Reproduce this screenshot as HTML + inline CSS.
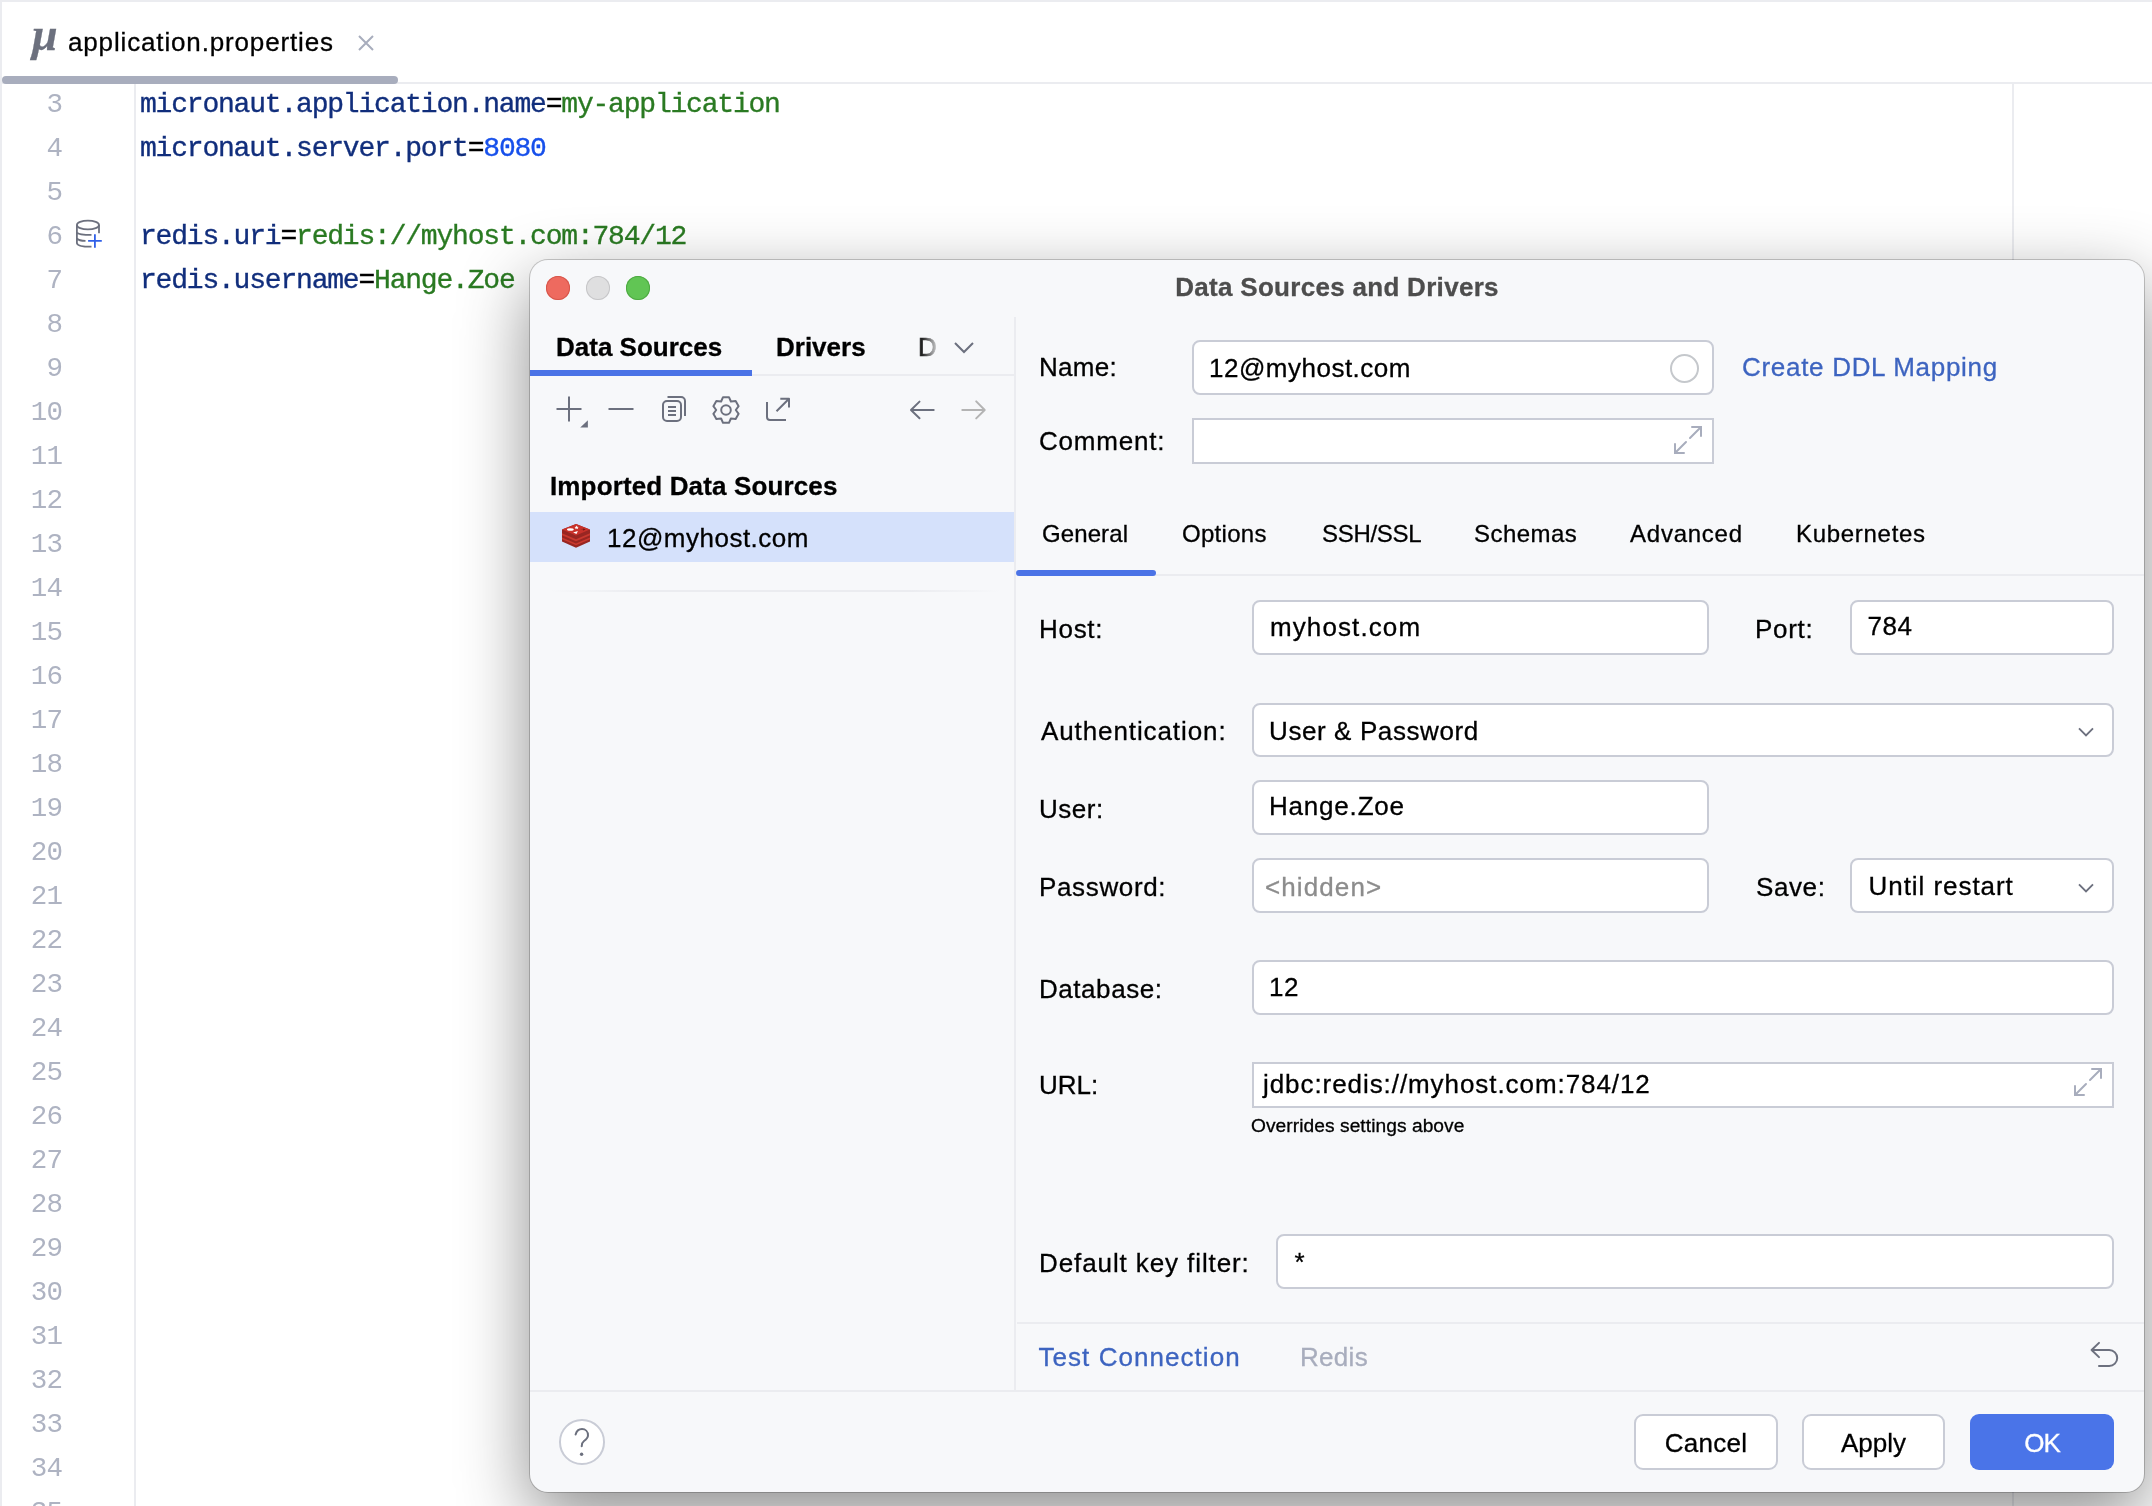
<!DOCTYPE html>
<html><head><meta charset="utf-8">
<style>
html,body{margin:0;padding:0;}
body{width:2152px;height:1506px;overflow:hidden;background:#fff;position:relative;will-change:transform;font-family:"Liberation Sans",sans-serif;color:#000;}
.a{position:absolute;}
.t{position:absolute;white-space:nowrap;line-height:1;font-size:26px;-webkit-text-stroke:0.3px currentColor;}
.ln{position:absolute;left:0;width:62px;text-align:right;font-family:"Liberation Mono",monospace;font-size:27.5px;letter-spacing:-0.9px;line-height:44px;color:#aeb3c2;}
.code{position:absolute;left:140px;font-family:"Liberation Mono",monospace;font-size:28px;letter-spacing:-1.2px;line-height:44px;white-space:pre;color:#000;-webkit-text-stroke:0.35px currentColor;}
.k{color:#112e7c}.v{color:#2a7a22}.n{color:#1750eb}
.inp{position:absolute;background:#fff;border:2px solid #c9ccd6;border-radius:8px;box-sizing:border-box;}
.sq{border-radius:0;}
.btn{position:absolute;background:#fff;border:2px solid #c9ccd6;border-radius:9px;box-sizing:border-box;}
.lbl{position:absolute;white-space:nowrap;line-height:1;font-size:26px;color:#000;-webkit-text-stroke:0.3px currentColor;}
.sep{position:absolute;height:2px;background:#ebecf0;}
</style></head><body>
<!-- editor frame -->
<div class="a" style="left:0;top:0;width:2152px;height:2px;background:#ebecf0"></div>
<div class="a" style="left:0;top:0;width:2px;height:1506px;background:#ebecf0"></div>
<div class="a" style="left:2px;top:82px;width:2150px;height:2px;background:#ebecf0"></div>
<div class="a" style="left:2px;top:76px;width:396px;height:8px;border-radius:4px;background:#a8adbd"></div>
<div class="a" style="left:134px;top:84px;width:2px;height:1422px;background:#ebecf0"></div>
<div class="a" style="left:2012px;top:84px;width:2px;height:1422px;background:#ebecf0"></div>
<!-- tab -->
<div class="t" style="left:32px;top:12px;font-family:'Liberation Serif',serif;font-style:italic;font-weight:bold;font-size:46px;color:#6c707e">&#956;</div>
<div class="t" style="left:68px;top:29px;letter-spacing:0.85px">application.properties</div>
<svg class="a" style="left:356px;top:33px" width="20" height="20" viewBox="0 0 20 20"><path d="M3 3L17 17M17 3L3 17" stroke="#a8adbd" stroke-width="2"/></svg>
<!-- gutter numbers -->
<div class="ln" style="top:83px">3</div>
<div class="ln" style="top:127px">4</div>
<div class="ln" style="top:171px">5</div>
<div class="ln" style="top:215px">6</div>
<div class="ln" style="top:259px">7</div>
<div class="ln" style="top:303px">8</div>
<div class="ln" style="top:347px">9</div>
<div class="ln" style="top:391px">10</div>
<div class="ln" style="top:435px">11</div>
<div class="ln" style="top:479px">12</div>
<div class="ln" style="top:523px">13</div>
<div class="ln" style="top:567px">14</div>
<div class="ln" style="top:611px">15</div>
<div class="ln" style="top:655px">16</div>
<div class="ln" style="top:699px">17</div>
<div class="ln" style="top:743px">18</div>
<div class="ln" style="top:787px">19</div>
<div class="ln" style="top:831px">20</div>
<div class="ln" style="top:875px">21</div>
<div class="ln" style="top:919px">22</div>
<div class="ln" style="top:963px">23</div>
<div class="ln" style="top:1007px">24</div>
<div class="ln" style="top:1051px">25</div>
<div class="ln" style="top:1095px">26</div>
<div class="ln" style="top:1139px">27</div>
<div class="ln" style="top:1183px">28</div>
<div class="ln" style="top:1227px">29</div>
<div class="ln" style="top:1271px">30</div>
<div class="ln" style="top:1315px">31</div>
<div class="ln" style="top:1359px">32</div>
<div class="ln" style="top:1403px">33</div>
<div class="ln" style="top:1447px">34</div>
<div class="ln" style="top:1491px">35</div>
<!-- code -->
<div class="code" style="top:83px"><span class="k">micronaut.application.name</span>=<span class="v">my-application</span>
<span class="k">micronaut.server.port</span>=<span class="n">8080</span>

<span class="k">redis.uri</span>=<span class="v">redis://myhost.com:784/12</span>
<span class="k">redis.username</span>=<span class="v">Hange.Zoe</span></div>
<!-- db icon -->
<svg class="a" style="left:74px;top:218px" width="32" height="32" viewBox="0 0 32 32" fill="none" stroke="#6c707e" stroke-width="1.8"><ellipse cx="13.95" cy="7" rx="11.05" ry="4.4"/><path d="M2.9 7V24.9C2.9 27.5 9 28.7 17.5 28.7M25 7V15.3M2.9 14.4C4 16 9 16.9 17.5 16.9M2.9 20.4C4 21.8 7.5 22.9 11.5 22.9"/><path d="M20.9 16.2V29.8M14.1 22.9H27.8" stroke="#3060e8"/></svg>

<!-- DIALOG -->
<div id="dlg" class="a" style="left:530px;top:260px;width:1614px;height:1232px;background:#f7f8fa;border-radius:18px;box-shadow:0 0 0 1px rgba(0,0,0,0.2),0 24px 70px rgba(0,0,0,0.45);overflow:hidden">
<!-- traffic lights -->
<div class="a" style="left:16px;top:16px;width:24px;height:24px;border-radius:50%;background:#ee6a5f;box-shadow:inset 0 0 0 1px #d6564b"></div>
<div class="a" style="left:56px;top:16px;width:24px;height:24px;border-radius:50%;background:#dfdfe0;box-shadow:inset 0 0 0 1px #c6c6c8"></div>
<div class="a" style="left:96px;top:16px;width:24px;height:24px;border-radius:50%;background:#61c554;box-shadow:inset 0 0 0 1px #4ea942"></div>
<div class="t" style="left:0;width:1614px;text-align:center;top:14px;font-weight:bold;color:#4d4d4d;letter-spacing:0.3px">Data Sources and Drivers</div>

<!-- left panel -->
<div class="t" style="left:26px;top:74px;font-weight:bold">Data Sources</div>
<div class="t" style="left:246px;top:74px;font-weight:bold">Drivers</div>
<div class="t" style="left:388px;top:74px;color:#222;-webkit-text-stroke:0.7px #222">D</div>
<div class="a" style="left:392px;top:70px;width:16px;height:36px;background:linear-gradient(90deg,rgba(247,248,250,0) 0%,rgba(247,248,250,0.85) 100%)"></div>
<svg class="a" style="left:424px;top:82px" width="20" height="12" viewBox="0 0 20 12"><path d="M1 1l9 9 9-9" fill="none" stroke="#6c707e" stroke-width="2"/></svg>
<div class="a" style="left:0;top:110px;width:222px;height:6px;background:#4b73e6"></div>
<div class="sep" style="left:222px;top:114px;width:262px"></div>
<div class="a" style="left:484px;top:57px;width:2px;height:1073px;background:#ebecf0"></div>
<!-- toolbar icons -->
<svg class="a" style="left:20px;top:130px" width="460" height="40" viewBox="0 0 460 40" fill="none" stroke="#6c707e" stroke-width="2" stroke-linejoin="round">
 <path d="M19 6.5v25M6.5 19h25"/>
 <path d="M30.2 37.6L37.9 30.2V37.6z" fill="#6c707e" stroke="none"/>
 <path d="M58.5 19h25"/>
 <rect x="113" y="11" width="18" height="20" rx="4"/>
 <path d="M117.5 7H131a4 4 0 0 1 4 4V26"/>
 <path d="M118 17h8M118 21h8M118 25h8"/>
 <circle cx="176" cy="20" r="4.8"/>
 <path d="M171.10 11.51 L173.03 7.14 L178.97 7.14 L180.90 11.51 L185.65 11.00 L188.62 16.14 L185.80 20.00 L188.62 23.86 L185.65 29.00 L180.90 28.49 L178.97 32.86 L173.03 32.86 L171.10 28.49 L166.35 29.00 L163.38 23.86 L166.20 20.00 L163.38 16.14 L166.35 11.00Z"/>
 <path d="M217 12V27a3 3 0 0 0 3 3H236M226.5 21.3L239 8.8M230.3 8.7H239V17.5"/>
 <path d="M383.7 20H361.5M369.5 11.6L361 20l8.5 8.3" stroke-linecap="round"/>
 <path d="M412.3 20H434.5M426.2 11.4L434.7 20l-8.5 8.4" stroke="#b4b4b4" stroke-linecap="round"/>
</svg>
<div class="t" style="left:20px;top:213px;font-weight:bold;letter-spacing:0.14px">Imported Data Sources</div>
<div class="a" style="left:0;top:252px;width:484px;height:50px;background:#d5e1fb"></div>
<svg class="a" style="left:32px;top:264px" width="28" height="24" viewBox="0 0 28 24"><path d="M0 5.5L14 0L28 5.5V17.6L14 23.7L0 17.6Z" fill="#982622"/><path d="M0 9.3L14 15.3L28 9.3V11.200000000000001L14 17.2L0 11.200000000000001Z" fill="#c9392f"/><path d="M0 13.4L14 19.4L28 13.4V15.3L14 21.299999999999997L0 15.3Z" fill="#c9392f"/><path d="M0 5.5L14.2 0L27.8 5.5L14 11.4Z" fill="#c8322b"/><ellipse cx="8.4" cy="5.5" rx="3.4" ry="1.25" fill="#fff"/><path d="M14.5 1.6l.7 1.2 1.5.1-1.1.9.5 1.4-1.5-.7-1.4.8.4-1.4-1.1-1 1.5-.1z" fill="#fff"/><path d="M11.1 8.5L15.9 6.9L14.5 10.1Z" fill="#fff"/><path d="M18.5 5.3L21.2 4.5L23.6 5.5L21.2 6.5Z" fill="#a52c26"/><path d="M21.2 4.5L23.6 5.5L21.2 6.4Z" fill="#6e1510"/></svg>
<div class="t" style="left:77px;top:265px;letter-spacing:0.5px">12@myhost.com</div>
<div class="a" style="left:20px;top:330px;width:450px;height:2px;background:linear-gradient(90deg,rgba(235,236,240,0),#ebecf0 20%,#ebecf0 80%,rgba(235,236,240,0))"></div>

<!-- right panel -->
<div class="lbl" style="left:509px;top:93.5px;letter-spacing:0.3px">Name:</div>
<div class="inp" style="left:662px;top:80px;width:522px;height:55px"></div>
<div class="t" style="left:679px;top:94.5px;letter-spacing:0.5px">12@myhost.com</div>
<div class="a" style="left:1140px;top:94px;width:29px;height:29px;border-radius:50%;box-sizing:border-box;border:2px solid #c5c8cc"></div>
<div class="t" style="left:1212px;top:94px;color:#3d64c0;letter-spacing:0.7px">Create DDL Mapping</div>
<div class="lbl" style="left:509px;top:167.5px;letter-spacing:0.8px">Comment:</div>
<div class="inp sq" style="left:662px;top:158px;width:522px;height:46px"></div>
<svg class="a" style="left:1142px;top:164px" width="32" height="32" viewBox="0 0 32 32" fill="none" stroke="#a8adbd" stroke-width="2"><path d="M18 14l11-11M20 3h9v9M14 18l-11 11M3 20v9h9" stroke-linecap="round"/></svg>

<div class="t" style="left:512px;top:261.5px;font-size:24px;letter-spacing:0.1px">General</div>
<div class="t" style="left:652px;top:261.5px;font-size:24px;letter-spacing:0.3px">Options</div>
<div class="t" style="left:792px;top:261.5px;font-size:24px;letter-spacing:-0.3px">SSH/SSL</div>
<div class="t" style="left:944px;top:261.5px;font-size:24px;letter-spacing:0.45px">Schemas</div>
<div class="t" style="left:1100px;top:261.5px;font-size:24px;letter-spacing:0.76px">Advanced</div>
<div class="t" style="left:1266px;top:261.5px;font-size:24px;letter-spacing:0.7px">Kubernetes</div>
<div class="sep" style="left:487px;top:314px;width:1127px"></div>
<div class="a" style="left:486px;top:310px;width:140px;height:6px;border-radius:3px;background:#4b73e6"></div>

<div class="lbl" style="left:509px;top:355.5px;letter-spacing:0.7px">Host:</div>
<div class="inp" style="left:722px;top:340px;width:457px;height:55px"></div>
<div class="t" style="left:740px;top:353.5px;letter-spacing:1.1px">myhost.com</div>
<div class="lbl" style="left:1225px;top:355.5px;letter-spacing:0.7px">Port:</div>
<div class="inp" style="left:1320px;top:340px;width:264px;height:55px"></div>
<div class="t" style="left:1337.5px;top:353px;letter-spacing:0.5px">784</div>

<div class="lbl" style="left:511px;top:458px;letter-spacing:0.9px">Authentication:</div>
<div class="inp" style="left:722px;top:443px;width:862px;height:54px"></div>
<div class="t" style="left:739px;top:458px;letter-spacing:0.6px">User &amp; Password</div>
<svg class="a" style="left:1547px;top:466px" width="18" height="12" viewBox="0 0 18 12"><path d="M2 2.3L9 9.3L16 2.3" fill="none" stroke="#6c707e" stroke-width="1.9"/></svg>

<div class="lbl" style="left:509px;top:535.5px;letter-spacing:0.5px">User:</div>
<div class="inp" style="left:722px;top:520px;width:457px;height:55px"></div>
<div class="t" style="left:739px;top:533px;letter-spacing:0.8px">Hange.Zoe</div>

<div class="lbl" style="left:509px;top:614px;letter-spacing:0.65px">Password:</div>
<div class="inp" style="left:722px;top:598px;width:457px;height:55px"></div>
<div class="t" style="left:735px;top:613.5px;color:#8c8c8c;letter-spacing:1.1px">&lt;hidden&gt;</div>
<div class="lbl" style="left:1226px;top:614px;letter-spacing:0.6px">Save:</div>
<div class="inp" style="left:1320px;top:598px;width:264px;height:55px"></div>
<div class="t" style="left:1338.5px;top:613px;letter-spacing:0.95px">Until restart</div>
<svg class="a" style="left:1547px;top:622px" width="18" height="12" viewBox="0 0 18 12"><path d="M2 2.3L9 9.3L16 2.3" fill="none" stroke="#6c707e" stroke-width="1.9"/></svg>

<div class="lbl" style="left:509px;top:716px;letter-spacing:0.55px">Database:</div>
<div class="inp" style="left:722px;top:700px;width:862px;height:55px"></div>
<div class="t" style="left:739px;top:714px;letter-spacing:0.5px">12</div>

<div class="lbl" style="left:509px;top:811.5px">URL:</div>
<div class="inp sq" style="left:722px;top:802px;width:862px;height:46px"></div>
<div class="t" style="left:733px;top:811px;letter-spacing:0.93px">jdbc:redis://myhost.com:784/12</div>
<svg class="a" style="left:1542px;top:806px" width="32" height="32" viewBox="0 0 32 32" fill="none" stroke="#a8adbd" stroke-width="2"><path d="M18 14l11-11M20 3h9v9M14 18l-11 11M3 20v9h9" stroke-linecap="round"/></svg>
<div class="t" style="left:721px;top:856px;font-size:19.2px;letter-spacing:0.05px">Overrides settings above</div>

<div class="lbl" style="left:509px;top:990px;letter-spacing:0.9px">Default key filter:</div>
<div class="inp" style="left:746px;top:974px;width:838px;height:55px"></div>
<div class="t" style="left:764.5px;top:988.5px">*</div>

<div class="sep" style="left:487px;top:1062px;width:1127px"></div>
<div class="t" style="left:508.5px;top:1084px;color:#3d64c0;letter-spacing:1.05px">Test Connection</div>
<div class="t" style="left:770px;top:1084px;color:#a8adbd;letter-spacing:0.3px">Redis</div>
<svg class="a" style="left:1558px;top:1080px" width="32" height="30" viewBox="0 0 32 30" fill="none" stroke="#6c707e" stroke-width="2"><path d="M11 2.9L3.6 10L11 17.1M3.6 10H21.2a8 8 0 0 1 0 16H11" stroke-linecap="round" stroke-linejoin="round"/></svg>
<div class="sep" style="left:0;top:1130px;width:1614px"></div>

<!-- bottom -->
<div class="a" style="left:29.2px;top:1159.2px;width:45.6px;height:45.6px;border-radius:50%;box-sizing:border-box;border:2px solid #c9ccd6;background:#fff"></div>
<svg class="a" style="left:25px;top:1155px" width="55" height="55" viewBox="0 0 55 55" fill="none" stroke="#6c707e" stroke-width="2" stroke-linecap="round"><path d="M20.6 19.6C21.5 16 24 14.1 27 14.1C30.5 14.1 33 16.8 33 20.2C33 23 31 24.5 29 26C27 27.5 26.7 29.5 26.7 31.3"/><circle cx="26.6" cy="39.3" r="1.7" fill="#6c707e" stroke="none"/></svg>
<div class="btn" style="left:1104px;top:1154px;width:144px;height:56px"></div>
<div class="t" style="left:1104px;width:144px;text-align:center;top:1170px;letter-spacing:0.28px">Cancel</div>
<div class="btn" style="left:1272px;top:1154px;width:143px;height:56px"></div>
<div class="t" style="left:1272px;width:143px;text-align:center;top:1170px">Apply</div>
<div class="a" style="left:1440px;top:1154px;width:144px;height:56px;border-radius:9px;background:#4a74e8"></div>
<div class="t" style="left:1440px;width:144px;text-align:center;top:1169.5px;color:#fff;letter-spacing:-1px">OK</div>
</div>
</body></html>
